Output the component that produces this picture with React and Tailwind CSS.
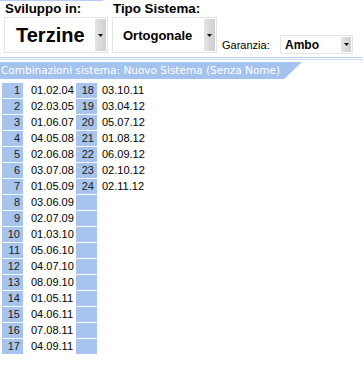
import React from "react";

const col1 = [
  ["1", "01.02.04"], ["2", "02.03.05"], ["3", "01.06.07"], ["4", "04.05.08"],
  ["5", "02.06.08"], ["6", "03.07.08"], ["7", "01.05.09"], ["8", "03.06.09"],
  ["9", "02.07.09"], ["10", "01.03.10"], ["11", "05.06.10"], ["12", "04.07.10"],
  ["13", "08.09.10"], ["14", "01.05.11"], ["15", "04.06.11"], ["16", "07.08.11"],
  ["17", "04.09.11"],
];
const col2 = [
  ["18", "03.10.11"], ["19", "03.04.12"], ["20", "05.07.12"], ["21", "01.08.12"],
  ["22", "06.09.12"], ["23", "02.10.12"], ["24", "02.11.12"],
];

function Arrow() {
  return (
    <svg width="5" height="3" viewBox="0 0 5 3">
      <polygon points="0,0 5,0 2.5,3" fill="#111" />
    </svg>
  );
}

function Btn({ cls }) {
  return (
    <div className={"flex items-center justify-center bg-gradient-to-r from-[#e4e4e4] to-[#cfcfcf] " + cls}>
      <Arrow />
    </div>
  );
}

export default function App() {
  const rows = col1.map((r, i) => [r, col2[i] || ["", ""]]);
  return (
    <div className="w-[363px] h-[366px] bg-white overflow-hidden font-['Liberation_Sans',Arial,sans-serif] text-black">
      <div className="h-px w-[103px] bg-[#b5cdf2]" />
      <div className="flex h-[52px] items-start">
        <div className="ml-[4px] w-[104px] flex flex-col">
          <div className="pl-[1px] h-[16px] text-[13.33px] font-bold leading-[16px]">Sviluppo in:</div>
          <div className="h-[36px] border border-[#e4e4e4] flex">
            <div className="flex-1 flex items-center pl-[11px] text-[20px] font-bold leading-none">Terzine</div>
            <Btn cls="w-[11px] my-px mr-px" />
          </div>
        </div>
        <div className="ml-[4px] w-[105px] flex flex-col">
          <div className="pl-[1px] h-[16px] text-[13.33px] font-bold leading-[16px]">Tipo Sistema:</div>
          <div className="h-[36px] border border-[#e4e4e4] flex">
            <div className="flex-1 flex items-center pl-[10px] text-[13px] font-bold leading-none">Ortogonale</div>
            <Btn cls="w-[11px] my-px mr-px" />
          </div>
        </div>
        <div className="ml-[5px] mt-[33px] flex items-center">
          <div className="w-[58px] text-[11px] leading-[19px] pt-[2px]">Garanzia:</div>
          <div className="w-[73px] h-[19px] border border-[#e4e4e4] flex">
            <div className="flex-1 flex items-center pl-[4px] text-[12px] font-bold leading-none">Ambo</div>
            <Btn cls="w-[10px] my-px mr-px" />
          </div>
        </div>
      </div>
      <div className="mt-[4px] h-px bg-[#b5cdf2]" />
      <div className="mt-px h-px bg-[#cddcf5]" />
      <div className="mt-[2px] h-[17px] w-[302px] bg-[#a4c2ee] [clip-path:polygon(0_0,100%_0,calc(100%-18px)_100%,0_100%)] flex items-center pl-px text-white text-[10.5px] font-['DejaVu_Sans',sans-serif] leading-none">
        Combinazioni sistema: Nuovo Sistema (Senza Nome)
      </div>
      <div className="mt-[4px] ml-[2px] flex flex-col gap-px text-[11px] leading-[15px]">
        {rows.map(([a, b], i) => (
          <div key={i} className="flex h-[15px]">
            <div className="w-[21px] bg-[#a7c4ee] text-right pr-[3px] text-[#222]">{a[0]}</div>
            <div className="w-[53px] pl-[8px]">{a[1]}</div>
            <div className="w-[21px] bg-[#a7c4ee] text-right pr-[3px] text-[#222]">{b[0]}</div>
            <div className="w-[50px] pl-[5px]">{b[1]}</div>
          </div>
        ))}
      </div>
    </div>
  );
}
